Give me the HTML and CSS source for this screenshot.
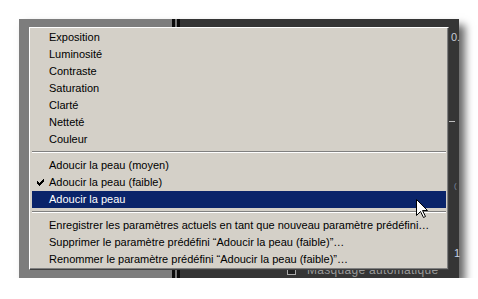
FILE: index.html
```html
<!DOCTYPE html>
<html lang="fr">
  <head>
    <meta charset="UTF-8" />
    <title>Menu contextuel</title>
    <link rel="stylesheet" href="styles.css">
  </head>
  <body>
    <div class="stage">
      <div class="shot">
        <div class="pane-left"></div>
        <div class="pane-right">
          <div class="rail"></div>
          <div class="panel-main">
            <div class="auto-mask"><span class="box"></span>Masquage automatique</div>
          </div>
          <div class="panel-edge">
            <span class="val val-top">0.</span>
            <span class="dash"></span>
            <span class="val val-mid">(</span>
            <span class="val val-low">1</span>
          </div>
        </div>

        <!-- Popup menu -->
        <div class="menu">
          <div class="item">Exposition</div>
          <div class="item">Luminosité</div>
          <div class="item">Contraste</div>
          <div class="item">Saturation</div>
          <div class="item">Clarté</div>
          <div class="item">Netteté</div>
          <div class="item">Couleur</div>
          <div class="sep"></div>
          <div class="item">Adoucir la peau (moyen)</div>
          <div class="item checked">
            <svg class="check" width="7" height="7" viewBox="0 0 7 7"><path d="M0 2h1v1h1v1h1v-1h1v-1h1v-1h1v-1h1v3h-1v1h-1v1h-1v1h-1v1h-1v-1h-1v-1h-1z" fill="#000"/></svg>
            Adoucir la peau (faible)
          </div>
          <div class="item active">Adoucir la peau</div>
          <div class="sep"></div>
          <div class="item">Enregistrer les paramètres actuels en tant que nouveau paramètre prédéfini…</div>
          <div class="item">Supprimer le paramètre prédéfini “Adoucir la peau (faible)”…</div>
          <div class="item">Renommer le paramètre prédéfini “Adoucir la peau (faible)”…</div>
        </div>

        <svg class="cursor" width="13" height="20" viewBox="0 0 13 20">
          <path d="M0.5 0.5 L0.5 16.5 L4.5 12.5 L7.5 18.5 L9.5 17.5 L6.5 11.5 L11.5 11.5 Z" fill="#fff" stroke="#000" stroke-width="1"/>
        </svg>
      </div>
    </div>
  </body>
</html>
```

FILE: styles.css
```css
/* General */
body {
  margin: 0;
  background: #fff;
  font-family: "Liberation Sans", Arial, sans-serif;
}

.stage {
  padding: 19px 0 0 19px;
}

/* Captured window */
.shot {
  position: relative;
  display: flex;
  width: 440px;
  height: 259px;
  box-shadow: 6px 6px 8px rgba(0, 0, 0, 0.6);
}

.pane-left {
  width: 153px;
  background: #7d7d7d;
}

.pane-right {
  flex: 1;
  display: flex;
  background: #353535;
}

.rail {
  width: 8px;
  background: linear-gradient(to right, #0b0b0b 0 3px, #777 3px 5px, #0b0b0b 5px 8px);
}

.panel-main {
  flex: 1;
  display: flex;
  flex-direction: column;
  justify-content: flex-end;
  padding: 0 0 1px 107px;
}

.auto-mask {
  display: flex;
  align-items: center;
  gap: 11px;
  font-size: 12px;
  line-height: 14px;
  color: #9a9a9a;
  letter-spacing: 0.3px;
}

.auto-mask .box {
  width: 7px;
  height: 7px;
  border: 1px solid #aaa;
  background: #222;
}

.panel-edge {
  width: 10px;
  display: flex;
  flex-direction: column;
  align-items: flex-start;
  font-size: 11px;
  line-height: 13px;
  color: #c8cbd4;
}

.val-top {
  margin-top: 12px;
  padding-left: 2px;
}

.dash {
  width: 6px;
  height: 1px;
  margin-top: 77px;
  background: #bdbdbd;
}

.val-mid {
  margin-top: 57px;
  padding-left: 5px;
  color: #7a8aa0;
  font-size: 8px;
}

.val-low {
  margin-top: 55px;
  padding-left: 5px;
  color: #c7d2e6;
}

/* Popup menu */
.menu {
  position: absolute;
  left: 10px;
  top: 8px;
  width: 420px;
  box-sizing: border-box;
  padding: 1px 2px 1px 2px;
  background: #d4d0c8;
  border: 1px solid;
  border-color: #fff #404040 #404040 #fff;
  box-shadow: inset -1px -1px #808080;
  font-size: 11px;
  color: #000;
}

.item {
  position: relative;
  height: 17px;
  line-height: 17px;
  padding-left: 17px;
  white-space: nowrap;
}

.item.active {
  background: #0a246a;
  color: #fff;
}

.check {
  position: absolute;
  left: 5px;
  top: 5px;
}

.sep {
  margin: 3px 0 4px;
  border-top: 1px solid #808080;
  border-bottom: 1px solid #fff;
}

.cursor {
  position: absolute;
  left: 397px;
  top: 180px;
}
```
